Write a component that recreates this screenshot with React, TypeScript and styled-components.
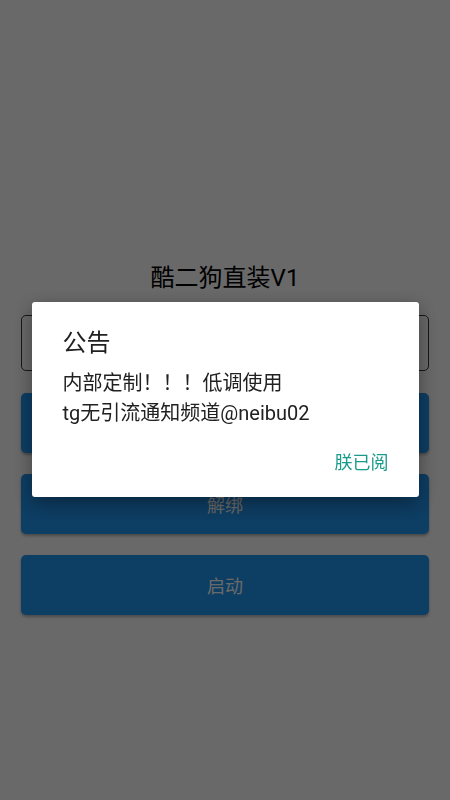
import React from "react";
import styled, { createGlobalStyle } from "styled-components";

const Global = createGlobalStyle`
  html, body { margin: 0; padding: 0; background: #ffffff; }
  body { font-family: Roboto, "Noto Sans CJK SC", sans-serif; }
  * { box-sizing: border-box; }
`;

const Page = styled.div`
  width: 450px;
  height: 800px;
  display: flex;
  flex-direction: column;
  padding: 262px 21px 0;
  background: #ffffff;
`;

const Title = styled.div`
  font-size: 24px;
  line-height: 32px;
  text-align: center;
  color: #000000;
  margin-bottom: 21px;
`;

const Input = styled.div`
  height: 56px;
  border: 1.5px solid #3a3a3a;
  border-radius: 5px;
  margin-bottom: 22px;
`;

const Buttons = styled.div`
  display: flex;
  flex-direction: column;
  gap: 21px;
`;

const Button = styled.div`
  height: 60px;
  border-radius: 5px;
  background: #2196f3;
  color: #ffffff;
  font-size: 18px;
  display: flex;
  align-items: center;
  justify-content: center;
  box-shadow: 0 2px 3px rgba(0, 0, 0, 0.3);
`;

const Scrim = styled.div`
  position: fixed;
  inset: 0;
  background: rgba(0, 0, 0, 0.59);
  display: flex;
  align-items: center;
  justify-content: center;
  padding-bottom: 2px;
`;

const Dialog = styled.div`
  width: 387px;
  background: #ffffff;
  border-radius: 3px;
  padding: 26px 30px 22px 31px;
  display: flex;
  flex-direction: column;
  box-shadow: 0 6px 20px rgba(0, 0, 0, 0.4);
`;

const DialogTitle = styled.div`
  font-size: 24px;
  line-height: 30px;
  color: #212121;
  margin-bottom: 10px;
`;

const DialogBody = styled.div`
  font-size: 20px;
  line-height: 30px;
  color: #212121;
`;

const Actions = styled.div`
  display: flex;
  justify-content: flex-end;
  margin-top: 23px;
`;

const ActionButton = styled.div`
  font-size: 18px;
  line-height: 24px;
  color: #1a9a8a;
`;

export default function App() {
  return (
    <>
      <Global />
      <Page>
        <Title>酷二狗直装V1</Title>
        <Input />
        <Buttons>
          <Button>绑定</Button>
          <Button>解绑</Button>
          <Button>启动</Button>
        </Buttons>
      </Page>
      <Scrim>
        <Dialog>
          <DialogTitle>公告</DialogTitle>
          <DialogBody>
            内部定制！！！低调使用
            <br />
            tg无引流通知频道@neibu02
          </DialogBody>
          <Actions>
            <ActionButton>朕已阅</ActionButton>
          </Actions>
        </Dialog>
      </Scrim>
    </>
  );
}
